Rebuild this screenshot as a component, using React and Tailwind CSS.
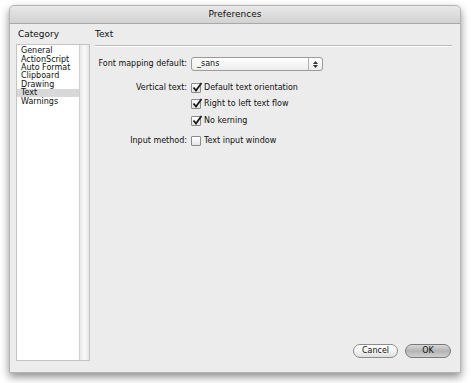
import React from "react";

const items = ["General", "ActionScript", "Auto Format", "Clipboard", "Drawing", "Text", "Warnings"];

function Check({ checked }) {
  return (
    <span className="relative inline-block w-[10px] h-[10px] border border-[#8a8a8a] bg-gradient-to-b from-white to-[#e4e4e4] rounded-[1px] shrink-0">
      {checked && (
        <svg className="absolute -top-[2px] left-0" width="11" height="11" viewBox="0 0 11 11">
          <path d="M1.5 5.5 L4 8.5 L9.5 1" fill="none" stroke="#1a1a1a" strokeWidth="1.8" />
        </svg>
      )}
    </span>
  );
}

function CheckRow({ label, checked }) {
  return (
    <div className="flex items-center gap-[3px]">
      <Check checked={checked} />
      <span>{label}</span>
    </div>
  );
}

export default function App() {
  return (
    <div className="w-[471px] h-[383px] bg-white pt-[5px] pl-[9px] text-[#111] text-[8px] leading-none" style={{ fontFamily: '"DejaVu Sans", sans-serif' }}>
      <div className="w-[452px] h-[368px] flex flex-col bg-[#ececec] rounded-t-[5px] border border-[#b4b4b4] shadow-[0_4px_8px_rgba(0,0,0,0.45)]">
        {/* title bar */}
        <div className="h-[18px] flex items-center justify-center text-[9px] bg-gradient-to-b from-[#e8e8e8] to-[#d2d2d2] border-b border-[#a8a8a8] rounded-t-[5px]">
          Preferences
        </div>

        <div className="flex-1 flex pl-[6px] pr-[8px] pt-[3px] pb-[11px]">
          {/* category column */}
          <div className="w-[74px] flex flex-col">
            <div className="h-[14px] flex items-center pl-[2px] text-[9px]">Category</div>
            <div className="flex-1 mt-[3px] flex border border-[#c4c4c4]">
              <div className="flex-1 bg-white pt-[2px]">
                {items.map((t) => (
                  <div key={t} className={`h-[8.4px] flex items-center pl-[4px] ${t === "Text" ? "bg-[#d8d8d8]" : ""}`}>
                    {t}
                  </div>
                ))}
              </div>
              <div className="w-[10px] bg-gradient-to-r from-[#e8e8e8] via-[#fafafa] to-[#e4e4e4] border-l border-[#d0d0d0]" />
            </div>
          </div>

          {/* content */}
          <div className="flex-1 ml-[5px] flex flex-col">
            <div className="h-[14px] flex items-center text-[9px]">Text</div>
            <div className="h-[2px] mt-[4px] border-t border-[#b8b8b8] border-b border-b-white" />

            <div className="grid grid-cols-[92px_1fr] gap-x-[4px] items-center mt-[10px]">
              <div className="text-right">Font mapping default:</div>
              <div className="w-[132px] h-[14px] flex items-center border border-[#9a9a9a] rounded-[3px] bg-gradient-to-b from-white to-[#ececec]">
                <span className="flex-1 pl-[5px]">_sans</span>
                <span className="w-[14px] h-full flex flex-col items-center justify-center gap-[1px] border-l border-[#b0b0b0]">
                  <svg width="5" height="3" viewBox="0 0 5 3"><path d="M0 3 L2.5 0 L5 3 Z" fill="#333" /></svg>
                  <svg width="5" height="3" viewBox="0 0 5 3"><path d="M0 0 L2.5 3 L5 0 Z" fill="#333" /></svg>
                </span>
              </div>

              <div className="text-right mt-[12px]">Vertical text:</div>
              <div className="mt-[12px]"><CheckRow label="Default text orientation" checked /></div>

              <div />
              <div className="mt-[6px]"><CheckRow label="Right to left text flow" checked /></div>

              <div />
              <div className="mt-[7px]"><CheckRow label="No kerning" checked /></div>

              <div className="text-right mt-[10px]">Input method:</div>
              <div className="mt-[10px]"><CheckRow label="Text input window" /></div>
            </div>

            <div className="flex-1" />

            <div className="flex justify-end gap-[7px] pr-[1px] mb-[3px]">
              <button className="w-[45px] h-[14px] rounded-full border border-[#8c8c8c] bg-gradient-to-b from-white via-[#f4f4f4] to-[#dedede] text-[8px]">
                Cancel
              </button>
              <button className="w-[46px] h-[14px] rounded-full border border-[#7a7a7a] bg-gradient-to-b from-[#d8d8d8] via-[#b4b4b4] to-[#cfcfcf] text-[8px]">
                OK
              </button>
            </div>
          </div>
        </div>
      </div>
    </div>
  );
}
